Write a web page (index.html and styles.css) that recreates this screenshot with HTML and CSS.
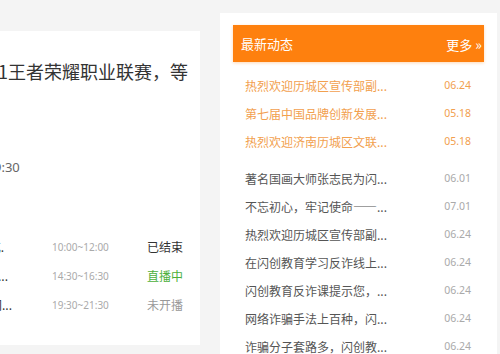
FILE: index.html
```html
<!DOCTYPE html>
<html lang="zh">
<head>
<meta charset="utf-8">
<link rel="stylesheet" href="styles.css">
</head>
<body>
<div class="page">
  <section class="live-card">
    <h2 class="live-title">2021王者荣耀职业联赛，等</h2>
    <div class="live-time">9:30</div>
    <ul class="schedule">
      <li class="sch-row"><span class="sch-name"><span>开幕式.</span></span><span class="sch-time">10:00~12:00</span><span class="sch-status done">已结束</span></li>
      <li class="sch-row"><span class="sch-name"><span>常规赛...</span></span><span class="sch-time">14:30~16:30</span><span class="sch-status live">直播中</span></li>
      <li class="sch-row"><span class="sch-name"><span>总决赛间...</span></span><span class="sch-time">19:30~21:30</span><span class="sch-status wait">未开播</span></li>
    </ul>
  </section>
  <aside class="news-card">
    <div class="news-head">
      <span class="news-head-title">最新动态</span>
      <span class="news-more">更多 <span class="raquo">»</span></span>
    </div>
    <ul class="news-list hot">
      <li class="news-item"><span class="news-text">热烈欢迎历城区宣传部副...</span><span class="news-date">06.24</span></li>
      <li class="news-item"><span class="news-text">第七届中国品牌创新发展...</span><span class="news-date">05.18</span></li>
      <li class="news-item"><span class="news-text">热烈欢迎济南历城区文联...</span><span class="news-date">05.18</span></li>
    </ul>
    <ul class="news-list">
      <li class="news-item"><span class="news-text">著名国画大师张志民为闪...</span><span class="news-date">06.01</span></li>
      <li class="news-item"><span class="news-text">不忘初心，牢记使命——...</span><span class="news-date">07.01</span></li>
      <li class="news-item"><span class="news-text">热烈欢迎历城区宣传部副...</span><span class="news-date">06.24</span></li>
      <li class="news-item"><span class="news-text">在闪创教育学习反诈线上...</span><span class="news-date">06.24</span></li>
      <li class="news-item"><span class="news-text">闪创教育反诈课提示您，...</span><span class="news-date">06.24</span></li>
      <li class="news-item"><span class="news-text">网络诈骗手法上百种，闪...</span><span class="news-date">06.24</span></li>
      <li class="news-item"><span class="news-text">诈骗分子套路多，闪创教...</span><span class="news-date">06.24</span></li>
    </ul>
  </aside>
</div>
</body>
</html>
```

FILE: styles.css
```css
* { box-sizing: border-box; }
html, body { margin: 0; padding: 0; }
body {
  background: #f4f4f4;
  font-family: "Microsoft YaHei", "Noto Sans CJK SC", "Noto Sans", sans-serif;
  width: 500px;
  height: 354px;
  overflow: hidden;
}
ul { list-style: none; margin: 0; padding: 0; }
.page {
  display: flex;
  align-items: flex-start;
  gap: 20px;
}
.live-card {
  width: 200px;
  height: 314px;
  margin-top: 31px;
  background: #fff;
  overflow: hidden;
  padding: 27px 17px 0 0;
}
.live-title {
  margin: 0 0 0 -32px;
  font-size: 18px;
  font-weight: normal;
  line-height: 26px;
  color: #333;
  white-space: nowrap;
}
.live-time {
  margin: 74px 0 0 -6px;
  font-size: 13px;
  line-height: 18px;
  color: #666;
  font-family: "Noto Sans", sans-serif;
}
.schedule { margin-top: 56px; }
.sch-row {
  display: flex;
  align-items: center;
  height: 29px;
}
.sch-name {
  width: 12px;
  display: flex;
  justify-content: flex-end;
  overflow: hidden;
  white-space: nowrap;
  font-size: 12px;
  color: #333;
}
.sch-row:nth-child(1) .sch-name { width: 4px; }
.sch-row:nth-child(2) .sch-name { width: 8px; }
.sch-time {
  margin-left: 40px;
  font-size: 10px;
  color: #aaa;
  font-family: "Noto Sans", sans-serif;
}
.sch-row:nth-child(1) .sch-time { margin-left: 48px; }
.sch-row:nth-child(2) .sch-time { margin-left: 44px; }
.sch-status {
  margin-left: auto;
  font-size: 12px;
}
.done { color: #333; }
.live { color: #4caf3a; }
.wait { color: #999; }

.news-card {
  width: 277px;
  height: 360px;
  margin-top: 13px;
  background: #fff;
  padding: 12px 13px 0 13px;
}
.news-head {
  height: 37px;
  background: #fe800e;
  display: flex;
  align-items: center;
  justify-content: space-between;
  padding: 0 2px 0 8px;
  color: #fff;
  font-size: 13px;
  box-shadow: 0 1px 3px rgba(254, 128, 14, 0.3);
}
.news-more { font-size: 13px; }
.raquo { font-size: 14px; }
.news-list { padding: 0 13px 0 12px; }
.news-list.hot { margin-top: 9px; margin-bottom: 9px; }
.news-item {
  display: flex;
  justify-content: space-between;
  align-items: center;
  height: 28px;
}
.news-text {
  font-size: 12px;
  color: #555;
  white-space: nowrap;
}
.news-date {
  font-size: 10.5px;
  color: #aaa;
  font-family: "Noto Sans", sans-serif;
}
.hot .news-text, .hot .news-date { color: #f2a04e; }
```
